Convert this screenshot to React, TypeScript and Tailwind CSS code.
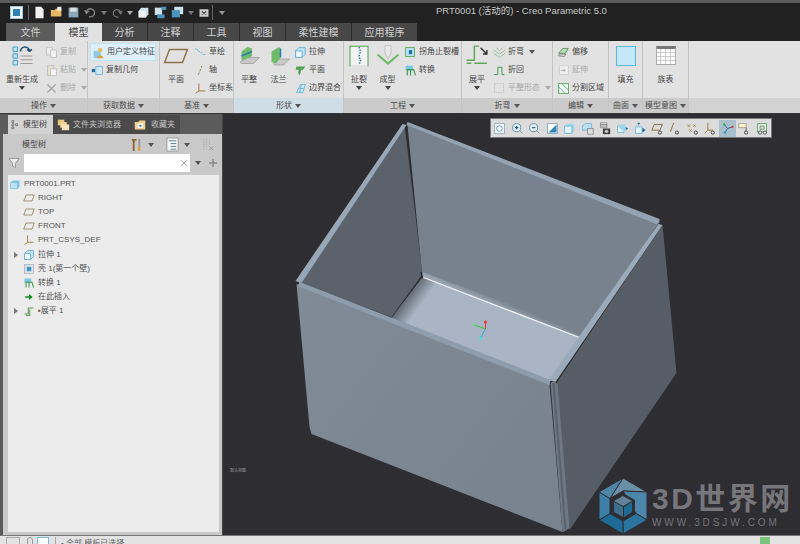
import { ReactNode } from "react";

const Ic = ({ s = 14, children }: { s?: number; children: ReactNode }) => (
  <svg width={s} height={s} viewBox="0 0 16 16" className="shrink-0">
    {children}
  </svg>
);

const Caret = ({ c = "#555" }: { c?: string }) => (
  <svg width="6" height="4" viewBox="0 0 6 4" className="shrink-0">
    <path d="M0 0h6L3 4z" fill={c} />
  </svg>
);

const Plane = ({ c = "#8a7448", w = 1.4 }: { c?: string; w?: number }) => (
  <path d="M4 4h11l-3 8H1z" fill="none" stroke={c} strokeWidth={w} />
);

const Solid = () => (
  <>
    <path d="M2 6l4-4h8v8l-4 4H2z" fill="#bfe3f5" stroke="#5aa7d0" />
    <path d="M2 6h8v8H2z" fill="#eef7fc" stroke="#5aa7d0" />
  </>
);

const Csys = () => (
  <path d="M6 2v9l-4 3M6 11h8" fill="none" stroke="#9a7a35" strokeWidth="1.2" />
);

const Bend = () => (
  <path d="M2 12h5V4h7M4 14h5V6" fill="none" stroke="#5b9a52" strokeWidth="1.4" />
);

// 工具栏里的小图标
const toolIcons: ReactNode[] = [
  <><rect x="2" y="2" width="12" height="12" fill="#f4f8fb" stroke="#8fa6b5" /><circle cx="8" cy="8" r="3.5" fill="none" stroke="#4d94bd" /></>,
  <><circle cx="7" cy="7" r="5" fill="#e6f2f9" stroke="#4d7f9c" /><path d="M5 7h4M7 5v4" stroke="#15527c" strokeWidth="1.4" /><path d="M11 11l3 3" stroke="#888" /></>,
  <><circle cx="7" cy="7" r="5" fill="#e6f2f9" stroke="#4d7f9c" /><path d="M5 7h4" stroke="#15527c" strokeWidth="1.4" /><path d="M11 11l3 3" stroke="#888" /></>,
  <><rect x="2" y="2" width="12" height="12" fill="#fff" stroke="#7d9fb4" /><path d="M3 13L13 3v10z" fill="#2f87b8" /></>,
  <><path d="M2 5l3-3h9v9l-3 3H2z" fill="#9fd6f0" /><path d="M2 5h9v9H2z" fill="#e4f4fb" stroke="#6ab2d6" /></>,
  <><path d="M2 5l3-3h8v8H2z" fill="#bcdff0" stroke="#6ab2d6" /><rect x="8" y="8" width="7" height="7" fill="#ddd" stroke="#888" /></>,
  <><path d="M3 1h8v6H3z" fill="#eee" stroke="#888" /><path d="M3 3h8M3 5h8" stroke="#777" /><rect x="6" y="8" width="9" height="7" fill="#444" /><circle cx="10.5" cy="11.5" r="2" fill="#ccc" /></>,
  <><path d="M2 5h8v8H2z" fill="#e8f5fb" stroke="#5eaed8" /><path d="M2 5l2-2h8v8l-2 2" fill="#9fd6f0" /><path d="M12 6l3 2-3 2z" fill="#246f9b" /></>,
  <><path d="M3 6h8v8H3z" fill="#e8f5fb" stroke="#5eaed8" /><path d="M7 1v3M5.500 2.500L7 1l1.500 1.500M12 8l3 2-3 2z" fill="#246f9b" stroke="#246f9b" /></>,
  <><path d="M4 3h10l-3 7H1z" fill="none" stroke="#8a7448" strokeWidth="1.2" /><circle cx="11" cy="13" r="2" fill="none" stroke="#333" /></>,
  <><path d="M7 1L3 12" stroke="#8a7448" strokeWidth="1.2" /><circle cx="11" cy="13" r="2" fill="none" stroke="#333" /></>,
  <><path d="M2 3l3 3M5 3L2 6M9 3l3 3M12 3L9 6M4 9l3 3M7 9l-3 3" stroke="#9a7a35" /><circle cx="12" cy="13" r="2" fill="none" stroke="#333" /></>,
  <><path d="M6 1v9l-4 4M6 10h6" fill="none" stroke="#9a7a35" strokeWidth="1.2" /><circle cx="12" cy="13" r="2" fill="none" stroke="#333" /></>,
  <><path d="M4 3l4 5 6-2M8 8l-3 5" fill="none" stroke="#2b6d8f" strokeWidth="1.2" /><circle cx="4" cy="3" r="1.500" fill="#3aa655" /><circle cx="14" cy="6" r="1.500" fill="#d9453d" /><circle cx="5" cy="13" r="1.500" fill="#2a9fd6" /></>,
  <><rect x="1" y="2" width="9" height="5" fill="#fff6c9" stroke="#999" /><path d="M10 7v4" stroke="#555" /><circle cx="10" cy="13" r="2" fill="none" stroke="#333" /></>,
  <><rect x="2" y="2" width="11" height="10" fill="#e5f5e6" stroke="#4d9c5a" /><path d="M5 5h5v4H5z" fill="#cfe6d0" stroke="#777" /><circle cx="5" cy="13" r="2" fill="#fff" stroke="#333" /><circle cx="11" cy="13" r="2" fill="#fff" stroke="#333" /></>,
];

const SmallItem = ({
  icon,
  label,
  off,
  caret,
  boxed,
}: {
  icon: ReactNode;
  label: string;
  off?: boolean;
  caret?: boolean;
  boxed?: boolean;
}) => (
  <div
    className={`flex h-[18px] items-center gap-[2px] whitespace-nowrap pl-[1px] ${off ? "text-[#a9a9a9]" : "text-[#454545]"} ${boxed ? "border border-[#bfe4f5] bg-[#def1fa]" : ""}`}
  >
    {icon}
    <span>{label}</span>
    {caret && (
      <span className="ml-[3px]">
        <Caret c={off ? "#aaa" : "#555"} />
      </span>
    )}
  </div>
);

const BigItem = ({
  icon,
  label,
  caret,
  w,
}: {
  icon: ReactNode;
  label: string;
  caret?: boolean;
  w: string;
}) => (
  <div className={`flex flex-col items-center ${w}`}>
    <div className="flex h-[28px] items-center justify-center pb-[3px]">{icon}</div>
    <div className="mt-[3px] leading-[12px] text-[#454545]">{label}</div>
    {caret && <Caret c="#444" />}
  </div>
);

const Group = ({
  w,
  label,
  active,
  children,
}: {
  w: string;
  label: string;
  active?: boolean;
  children: ReactNode;
}) => (
  <div className={`flex shrink-0 flex-col border-r border-[#c4c4c4] ${w}`}>
    <div className="flex h-[57px] overflow-hidden pt-[2px]">{children}</div>
    <div
      className={`flex h-[15px] items-center justify-center gap-[3px] text-[#4c4c4c] ${active ? "bg-[#cfdde6]" : "bg-[#cbcbcb]"}`}
    >
      {label}
      <Caret />
    </div>
  </div>
);

const treeRows: { label: string; icon: ReactNode; arrow?: boolean }[] = [
  { label: "RIGHT", icon: <Plane w={1} /> },
  { label: "TOP", icon: <Plane w={1} /> },
  { label: "FRONT", icon: <Plane w={1} /> },
  { label: "PRT_CSYS_DEF", icon: <Csys /> },
  { label: "拉伸 1", icon: <Solid />, arrow: true },
  {
    label: "壳 1(第一个壁)",
    icon: (
      <>
        <rect x="2" y="2" width="12" height="12" fill="#dfe6ea" stroke="#aab" />
        <rect x="5" y="5" width="6" height="6" fill="#3f98c9" />
      </>
    ),
  },
  {
    label: "转换 1",
    icon: (
      <>
        <path d="M2 2h9v6H2z" fill="#7cc6ea" />
        <path d="M4 14V7h8l2 7M8 7v7" fill="none" stroke="#3f9a52" strokeWidth="1.4" />
      </>
    ),
  },
  { label: "在此插入", icon: <path d="M3 7h5V4l5 4-5 4V9H3z" fill="#0c8c1d" /> },
  { label: "▪展平 1", icon: <Bend />, arrow: true },
];

export default function App() {
  return (
    <div className="flex h-[544px] w-[800px] flex-col overflow-hidden bg-[#5b5b5b] font-['Liberation_Sans','Noto_Sans_CJK_SC',sans-serif] text-[8px]">
      {/* 标题栏 */}
      <div className="mt-[3px] flex h-[20px] shrink-0 items-center bg-[#212121]">
        <div className="flex w-[436px] shrink-0 items-center pb-[1px] pl-[10px]">
          <div className="flex h-[13px] w-[13px] items-center justify-center border border-[#9fc7dd] bg-[#f2f7fa]">
            <div className="h-[7px] w-[7px] bg-[#2c83b6]" />
          </div>
          <div className="ml-[5px] mr-[4px] h-[15px] w-px bg-[#666]" />
          <div className="flex items-center gap-[4px]">
            <Ic s={13}><path d="M3 1h7l3 3v11H3z" fill="#f2f2f2" /></Ic>
            <Ic s={13}><path d="M1 5h5l1-2h7v10H1z" fill="#e5b866" /><path d="M9 1h5v5H9z" fill="#eee" /></Ic>
            <Ic s={13}><rect x="2" y="2" width="12" height="12" fill="#8aa6ba" /><rect x="4" y="2" width="8" height="5" fill="#ddd" /></Ic>
            <Ic s={13}><path d="M3 8a5 5 0 1 1 3 5M1 5l2 4 3-3" fill="none" stroke="#888" strokeWidth="1.600" /></Ic>
            <Caret c="#777" />
            <Ic s={12}><path d="M13 8a5 5 0 1 0-3 5M15 5l-2 4-3-3" fill="none" stroke="#777" strokeWidth="1.600" /></Ic>
            <Caret c="#aaa" />
            <Ic s={13}><path d="M2 6l3-4h9v8l-3 4H2z" fill="#cfe2ec" /><path d="M2 6h9v8H2z" fill="#eef4f7" /></Ic>
            <Ic s={13}><rect x="1" y="2" width="9" height="9" fill="#cfe2ec" /><path d="M9 1h6v4H9zM4 10h9v5H4z" fill="#4d94bd" /></Ic>
            <Ic s={13}><rect x="4" y="1" width="11" height="9" fill="#cfe2ec" /><rect x="1" y="5" width="10" height="9" fill="#4d94bd" /></Ic>
            <Caret c="#777" />
            <Ic s={12}><rect x="2" y="3" width="12" height="10" fill="#d0d0d0" /><path d="M5 6l6 4M11 6l-6 4" stroke="#444" strokeWidth="1.500" /></Ic>
          </div>
          <div className="ml-[2px] mr-[6px] h-[15px] w-px bg-[#666]" />
          <Caret c="#999" />
        </div>
        <div className="whitespace-nowrap pb-[3px] text-[9.5px] text-[#c9c9c9]">PRT0001 (活动的) - Creo Parametric 5.0</div>
      </div>

      {/* 选项卡 */}
      <div className="flex h-[18px] shrink-0 bg-[#212121] pl-[6px] text-[10px] text-[#d2d2d2]">
        <div className="flex w-[49px] items-center justify-center bg-[#5c5c5c]">文件</div>
        <div className="flex w-[47px] items-center justify-center bg-[#e2e2e2] text-[#444]">模型</div>
        <div className="flex w-[46px] items-center justify-center border-r border-[#2b2b2b] bg-[#474747]">分析</div>
        <div className="flex w-[46px] items-center justify-center border-r border-[#2b2b2b] bg-[#474747]">注释</div>
        <div className="flex w-[46px] items-center justify-center border-r border-[#2b2b2b] bg-[#474747]">工具</div>
        <div className="flex w-[46px] items-center justify-center border-r border-[#2b2b2b] bg-[#474747]">视图</div>
        <div className="flex w-[66px] items-center justify-center border-r border-[#2b2b2b] bg-[#474747]">柔性建模</div>
        <div className="flex w-[65px] items-center justify-center bg-[#474747]">应用程序</div>
      </div>

      {/* 功能区 */}
      <div className="flex h-[72px] shrink-0 bg-[#e2e2e2]">
        <Group w="w-[88px]" label="操作">
          <BigItem
            w="w-[44px]"
            label="重新生成"
            caret
            icon={
              <Ic s={24}>
                <path d="M2 2h3v3H2zM2 6.500h3v3H2zM2 11h3v3H2z" fill="#bfe3f5" stroke="#3f98c9" strokeWidth="0.600" />
                <path d="M7 5a3 3 0 0 1 6 0M13 5l-1.500-1.500M13 5l1.500-1.500" fill="none" stroke="#17507a" strokeWidth="1.100" />
                <path d="M7 8h8M7 10.500h8M7 13h8" stroke="#999" strokeWidth="0.700" />
              </Ic>
            }
          />
          <div className="flex flex-col">
            <SmallItem off label="复制" icon={<Ic s={13}><rect x="2" y="2" width="7" height="9" fill="#eee" stroke="#bbb" /><rect x="7" y="5" width="7" height="9" fill="#f4f4f4" stroke="#bbb" /></Ic>} />
            <SmallItem off caret label="粘贴" icon={<Ic s={13}><rect x="3" y="2" width="8" height="12" fill="#e8e0cc" stroke="#bbb" /><rect x="7" y="6" width="7" height="8" fill="#f6f6f6" stroke="#bbb" /></Ic>} />
            <SmallItem off caret label="删除" icon={<Ic s={13}><path d="M3 3l10 10M13 3L3 13" stroke="#a8a8a8" strokeWidth="1.800" /></Ic>} />
          </div>
        </Group>

        <Group w="w-[72px]" label="获取数据">
          <div className="flex flex-col pl-[2px]">
            <SmallItem boxed label="用户定义特征" icon={<Ic s={13}><rect x="2" y="6" width="9" height="9" fill="#8fc9e8" /><circle cx="10" cy="5" r="3" fill="#e5c06a" /><path d="M6 15c0-5 8-5 8 0z" fill="#d8a94a" /></Ic>} />
            <SmallItem label="复制几何" icon={<Ic s={13}><rect x="1" y="6" width="4" height="4" fill="#1f6fa3" /><rect x="6" y="3" width="8" height="10" fill="#cfe7f5" stroke="#6ab2d6" /></Ic>} />
          </div>
        </Group>

        <Group w="w-[74px]" label="基准">
          <BigItem w="w-[32px]" label="平面" icon={<Ic s={26}><Plane w={0.9} /></Ic>} />
          <div className="flex flex-col pl-[1px]">
            <SmallItem label="草绘" icon={<Ic s={13}><path d="M1 4c3-3 3 3 6 3s3 6 7 3" fill="none" stroke="#3f98c9" strokeDasharray="2 1" /></Ic>} />
            <SmallItem label="轴" icon={<Ic s={13}><path d="M10 2L5 14" stroke="#7c6a3e" strokeDasharray="3 1.500" /></Ic>} />
            <SmallItem label="坐标系" icon={<Ic s={13}><Csys /></Ic>} />
          </div>
        </Group>

        <Group w="w-[110px]" label="形状" active>
          <BigItem
            w="w-[30px]"
            label="平整"
            icon={
              <Ic s={24}>
                <path d="M2 12l5-3h8l-4 4H3z" fill="#c8c8c8" stroke="#999" strokeWidth="0.500" />
                <path d="M3 11V5l4-3 3 1v5l-4 2z" fill="#6fbb6a" />
                <path d="M3 8l7-3" stroke="#2a7db0" />
              </Ic>
            }
          />
          <BigItem
            w="w-[29px]"
            label="法兰"
            icon={
              <Ic s={24}>
                <path d="M4 13l4-3h7l-4 4H5z" fill="#c8c8c8" stroke="#999" strokeWidth="0.500" />
                <path d="M3 12V5l5-3 1 1v6l-3 4z" fill="#6fbb6a" />
                <path d="M9 3v6" stroke="#2a7db0" />
              </Ic>
            }
          />
          <div className="flex flex-col">
            <SmallItem label="拉伸" icon={<Ic s={13}><Solid /></Ic>} />
            <SmallItem label="平面" icon={<Ic s={13}><path d="M3 3h11l-3 4H9l-2 7-2-3 1-4H2z" fill="#4fa04f" /></Ic>} />
            <SmallItem label="边界混合" icon={<Ic s={13}><path d="M3 13L8 3h6l-3 10z" fill="#cfe7f5" stroke="#5eaed8" /><path d="M6 8h6M9 3l-2 10" stroke="#5eaed8" /></Ic>} />
          </div>
        </Group>

        <Group w="w-[118px]" label="工程">
          <BigItem
            w="w-[30px]"
            label="扯裂"
            caret
            icon={
              <Ic s={24}>
                <path d="M2 2h12v12H2z" fill="#f3f3f3" />
                <path d="M2 1.500h12M2 1v14M14 1v14" stroke="#58a85a" strokeWidth="0.700" fill="none" />
                <path d="M8 2l1 3-1 3 1 3-1 3" stroke="#2e7da8" strokeDasharray="1 0.800" fill="none" />
              </Ic>
            }
          />
          <BigItem
            w="w-[27px]"
            label="成型"
            caret
            icon={
              <Ic s={24}>
                <path d="M1 7l7 6 7-6" fill="none" stroke="#6fbb6a" strokeWidth="1.400" />
                <path d="M6 1h4v5l-2 4-2-4z" fill="#e9e9e9" stroke="#aaa" strokeWidth="0.400" />
              </Ic>
            }
          />
          <div className="flex flex-col pl-[2px]">
            <SmallItem label="拐角止裂槽" icon={<Ic s={13}><rect x="2" y="2" width="11" height="11" fill="#b9e0f3" stroke="#4fa04f" /><rect x="6" y="5" width="4" height="5" fill="#1f6fa3" /></Ic>} />
            <SmallItem label="转换" icon={<Ic s={13}><path d="M2 2h9v6H2z" fill="#7cc6ea" /><path d="M4 14V7h8l2 7M8 7v7" fill="none" stroke="#3f9a52" strokeWidth="1.400" /></Ic>} />
          </div>
        </Group>

        <Group w="w-[91px]" label="折弯">
          <BigItem
            w="w-[30px]"
            label="展平"
            caret
            icon={
              <Ic s={25}>
                <path d="M1 11h5V2h3M6 13h8M1 13h3" fill="none" stroke="#5fa85c" strokeWidth="0.900" />
                <path d="M10 3l4 4M14 4.500V7h-2.500" fill="none" stroke="#333" strokeWidth="0.900" />
              </Ic>
            }
          />
          <div className="flex flex-col">
            <SmallItem caret label="折弯" icon={<Ic s={13}><path d="M1 5l7 5 7-5M1 9l7 5 7-5M4 2l4 4 4-4" fill="none" stroke="#8cb98a" /></Ic>} />
            <SmallItem label="折回" icon={<Ic s={13}><path d="M1 13h5V4h5v9h3" fill="none" stroke="#3f9a52" strokeWidth="1.200" /></Ic>} />
            <SmallItem off caret label="平整形态" icon={<Ic s={13}><rect x="2" y="2" width="11" height="11" fill="none" stroke="#bbb" strokeDasharray="2 1" /></Ic>} />
          </div>
        </Group>

        <Group w="w-[56px]" label="编辑">
          <div className="flex flex-col pl-[3px]">
            <SmallItem label="偏移" icon={<Ic s={13}><path d="M2 9l5-6h7l-4 6z" fill="#bcdcb8" stroke="#4f8f4f" /><path d="M2 12l1-2h8l-2 3z" fill="#ddd" stroke="#777" /></Ic>} />
            <SmallItem off label="延伸" icon={<Ic s={13}><rect x="3" y="2" width="11" height="11" fill="#eee" stroke="#ccc" /><path d="M5 8h5M8 6l2 2-2 2" stroke="#aaa" fill="none" /></Ic>} />
            <SmallItem label="分割区域" icon={<Ic s={13}><rect x="2" y="2" width="12" height="12" fill="#f3fbe9" stroke="#4fa04f" /><path d="M2 6l8 8M6 2l8 8" stroke="#3f8fb8" /></Ic>} />
          </div>
        </Group>

        <Group w="w-[34px]" label="曲面">
          <BigItem
            w="w-full"
            label="填充"
            icon={
              <div className="h-[20px] w-[20px] border border-[#59b8e0] bg-[#c4e8f7]" />
            }
          />
        </Group>

        <Group w="w-[46px]" label="模型意图">
          <BigItem
            w="w-full"
            label="族表"
            icon={
              <div className="grid h-[19px] w-[20px] grid-cols-4 gap-px border border-[#aaa] border-t-[3px] border-t-[#777] bg-[#ccc]">
                {Array.from({ length: 16 }).map((_, i) => (
                  <div key={i} className="bg-white" />
                ))}
              </div>
            }
          />
        </Group>

        <div className="flex flex-1 flex-col">
          <div className="h-[57px]" />
          <div className="h-[15px] bg-[#d2d2d2]" />
        </div>
      </div>
      <div className="h-px shrink-0 bg-[#333]" />

      <div className="flex min-h-0 flex-1">
        {/* 左侧面板 */}
        <div className="flex w-[223px] shrink-0 flex-col border-r border-[#444] bg-[#5b5b5b] pl-[3px]">
          <div className="mt-px flex h-[19px] shrink-0 text-[8px] text-[#c8c8c8]">
            <div className="ml-[5px] flex w-[45px] items-center gap-[3px] bg-[#d3d3d3] pl-[2px] text-[#444]">
              <Ic s={10}><path d="M3 1h3v3H3zM3 6h3v3H3zM3 11h3v3H3zM9 6h3v3H9z" fill="none" stroke="#555" /></Ic>
              模型树
            </div>
            <div className="flex w-[75px] items-center gap-[3px] bg-[#4a4a4a] pl-[4px]">
              <Ic s={13}><rect x="1" y="2" width="8" height="7" fill="#e8c77c" /><rect x="4" y="5" width="8" height="7" fill="#f0d79c" /><rect x="6" y="8" width="9" height="7" fill="#f5e4bb" /></Ic>
              文件夹浏览器
            </div>
            <div className="flex w-[52px] items-center gap-[5px] bg-[#4a4a4a] pl-[6px]">
              <Ic s={12}><path d="M1 4h5l1-2h8v12H1z" fill="#eecf8e" /><rect x="5" y="6" width="7" height="6" fill="#fff" /><circle cx="8.500" cy="9" r="1.500" fill="#1f6fa3" /></Ic>
              收藏夹
            </div>
          </div>
          <div className="flex min-h-0 flex-1 flex-col bg-[#c9c9c9] pb-[3px] pl-[5px] pr-[3px]">
            <div className="flex h-[20px] shrink-0 items-center pl-[14px] pr-[3px] pt-[1px] text-[#444]">
              模型树
              <div className="ml-auto flex items-center gap-[4px]">
                <Ic s={15}><path d="M3 2h5v2H6v11H4V4H3z" fill="#8a6a30" /><path d="M10 2h2v8h-2z" fill="#999" /><path d="M10 10h2v5h-2z" fill="#d99b2a" /></Ic>
                <Caret />
                <span className="w-[3px]" />
                <Ic s={15}><path d="M2 1h12v14H2z" fill="#f5f5f5" stroke="#999" /><path d="M4 4h8M6 7h6M6 10h6M6 13h6" stroke="#4d7f9c" /></Ic>
                <Caret />
                <span className="w-[3px]" />
                <Ic s={15}><path d="M3 2v12M6 2v8M9 4v5" stroke="#aaa" strokeDasharray="1.500 1" /><path d="M9 10l4 4M13 10l-4 4" stroke="#999" /></Ic>
              </div>
            </div>
            <div className="flex h-[18px] shrink-0 items-center">
              <Ic s={12}><path d="M1 2h14L10 8v6l-4-2V8z" fill="#eee" stroke="#888" /></Ic>
              <div className="ml-[4px] flex h-[18px] w-[166px] items-center justify-end bg-white pr-[3px] text-[#999]">
                <svg width="6" height="6" viewBox="0 0 6 6"><path d="M0 0l6 6M6 0L0 6" stroke="#aaa" /></svg>
              </div>
              <span className="ml-[5px]"><Caret /></span>
              <svg width="8" height="8" viewBox="0 0 8 8" className="ml-[8px]"><path d="M4 0v8M0 4h8" stroke="#8a8a8a" strokeWidth="1.500" /></svg>
            </div>
            <div className="mt-[3px] min-h-0 flex-1 bg-[#ececec] pt-[2px] text-[#555]">
              <div className="flex h-[14.1px] items-center gap-[3px] pl-[2px]">
                <Ic s={11}><path d="M1 5l3-3h10v9l-3 3H1z" fill="#7cc6ea" /><path d="M1 5h10v9H1z" fill="#bfe3f5" stroke="#58aed6" strokeWidth="0.600" /></Ic>
                PRT0001.PRT
              </div>
              {treeRows.map((r) => (
                <div key={r.label} className="flex h-[14.1px] items-center">
                  <div className="flex w-[15px] justify-center pl-[1px]">
                    {r.arrow && (
                      <svg width="4" height="6" viewBox="0 0 4 6"><path d="M0 0l4 3-4 3z" fill="#777" /></svg>
                    )}
                  </div>
                  <Ic s={12}>{r.icon}</Ic>
                  <span className="ml-[3px] whitespace-nowrap">{r.label}</span>
                </div>
              ))}
            </div>
          </div>
        </div>

        {/* 图形区 */}
        <div className="relative min-w-0 flex-1 bg-[#2e2d32]">
          <svg viewBox="224 114 576 421" className="h-full w-full">
            <defs>
              <linearGradient id="floorShade" x1="407" y1="296" x2="421" y2="306" gradientUnits="userSpaceOnUse">
                <stop offset="0" stopColor="#5e6670" />
                <stop offset="1" stopColor="#a9b5c5" />
              </linearGradient>
              <linearGradient id="frontWall" x1="300" y1="290" x2="550" y2="480" gradientUnits="userSpaceOnUse">
                <stop offset="0" stopColor="#808b98" />
                <stop offset="1" stopColor="#79838f" />
              </linearGradient>
              <linearGradient id="backFold" x1="502" y1="300" x2="499" y2="307" gradientUnits="userSpaceOnUse">
                <stop offset="0" stopColor="#78828e" />
                <stop offset="1" stopColor="#9aa4b2" />
              </linearGradient>
            </defs>
            {/* 内壁 */}
            <polygon points="408,125 660,222 582,338 423,278" fill="#78828e" />
            <polygon points="423,272 582,331 582,338 423,278" fill="url(#backFold)" />
            <polygon points="405,125 423,274 392,317 300,283" fill="#5b626c" />
            {/* 底面 */}
            <polygon points="423,277 582,338 551,381 392,318" fill="url(#floorShade)" />
            <line x1="424" y1="277.500" x2="580" y2="337.500" stroke="#f2f5f8" strokeWidth="1.200" />
            <line x1="421.500" y1="272" x2="423" y2="278" stroke="#1f2024" strokeWidth="1.200" />
            {/* 右外壁 */}
            <polygon points="663,225 677,373 570,530 557,383" fill="#575d67" />
            {/* 前外壁 */}
            <polygon points="297,284 550,384 563,532 312,434 310,427" fill="url(#frontWall)" />
            {/* 翻边 */}
            <polygon points="403,124 407,125 302,283 296,281" fill="#98a7b7" />
            <polygon points="408,122 660,219 660,222 657,224 407,125" fill="#94a3b3" />
            <polygon points="659,224 663,225 556,382 549,380" fill="#9cabbb" />
            <polygon points="300,282 393,318 551,380 550,385 298,286" fill="#8e9dad" />
            {/* 折弯 */}
            <polygon points="551,383 554,381 558,384 570,528 566,531 563,532" fill="#6e7884" />
            <polygon points="553,383 555,383 567,530 565,530" fill="#59616c" />
            {/* 坐标系 */}
            <line x1="486" y1="322" x2="486" y2="329" stroke="#e33" strokeWidth="1" />
            <circle cx="486" cy="322" r="1.500" fill="#f33" />
            <line x1="486" y1="329" x2="475" y2="325" stroke="#3c3" strokeWidth="1" />
            <circle cx="475" cy="325" r="1" fill="#5e5" />
            <line x1="486" y1="329" x2="481" y2="338" stroke="#3ac" strokeWidth="1" />
            <circle cx="481" cy="338" r="1.300" fill="#2ee" />
          </svg>

          {/* 视图工具栏 */}
          <div className="absolute left-[267px] top-[4px] flex h-[20px] w-[282px] items-center border border-[#777] bg-[#dcdcdc]">
            {toolIcons.map((icon, i) => (
              <div
                key={i}
                className={`flex h-[17px] w-[17.5px] items-center justify-center ${i === 13 ? "bg-[#a9bfcc]" : ""}`}
              >
                <Ic s={13}>{icon}</Ic>
              </div>
            ))}
          </div>

          <div className="absolute bottom-[61px] left-[7px] text-[4px] text-[#999]">默认视图</div>

          {/* 水印 */}
          <div className="absolute left-[375px] top-[363px] flex items-start">
            <svg width="50" height="58" viewBox="0 0 50 58">
              <polygon points="25,1 49,15 49,43 25,57 1,43 1,15" fill="#2e2d32" />
              <g stroke="#2e2d32" strokeWidth="1">
                <polygon points="25,1 49,15 25,14 12,21.500" fill="#6b8fa6" />
                <polygon points="49,15 49,43 38,36.500 25,14" fill="#4c86ab" />
                <polygon points="49,43 25,57 25,44 38,36.500" fill="#2a749f" />
                <polygon points="25,57 1,43 12,36.500 25,44" fill="#1d6a96" />
                <polygon points="1,43 1,15 12,21.500 12,36.500" fill="#3d7fa6" />
                <polygon points="1,15 25,1 12,21.500" fill="#4f86a8" />
              </g>
              <polygon points="25,16 37,23 37,36 25,43 13,36 13,23" fill="#2e2d32" />
              <polygon points="25,19 34,24 25,29 16,24" fill="#64839a" />
              <polygon points="16,25 25,30 25,40 16,35" fill="#3b6e8f" />
              <polygon points="34,25 34,35 26,40 26,30" fill="#1f6a94" />
            </svg>
            <div className="ml-[4px] flex flex-col text-[#77777b]">
              <div className="mt-[7px] whitespace-nowrap text-[30px] font-bold leading-[30px] tracking-[2.5px]">3D世界网</div>
              <div className="mt-[3px] whitespace-nowrap font-['Liberation_Sans',sans-serif] text-[10px] leading-[12px] tracking-[2.9px]">WWW.3DSJW.COM</div>
            </div>
          </div>
        </div>
      </div>

      {/* 状态栏 */}
      <div className="flex h-[9px] shrink-0 items-start overflow-hidden border-t border-[#777] bg-[#e3e3e3] pl-[6px] pt-[1px] text-[#666]">
        <div className="h-[10px] w-[14px] border border-[#aaa]" />
        <div className="ml-[7px] h-[10px] w-[6px] rounded-full border border-[#999]" />
        <div className="ml-[4px] h-[10px] w-[12px] border border-[#7cb7d6] bg-white" />
        <div className="ml-[6px] h-[10px] w-px bg-[#aaa]" />
        <span className="ml-[5px] mt-[1px] whitespace-nowrap">• 全部 模板已选择</span>
        <div className="ml-auto mr-[30px] h-[8px] w-[10px] bg-[#7cc47c]" />
      </div>
    </div>
  );
}
